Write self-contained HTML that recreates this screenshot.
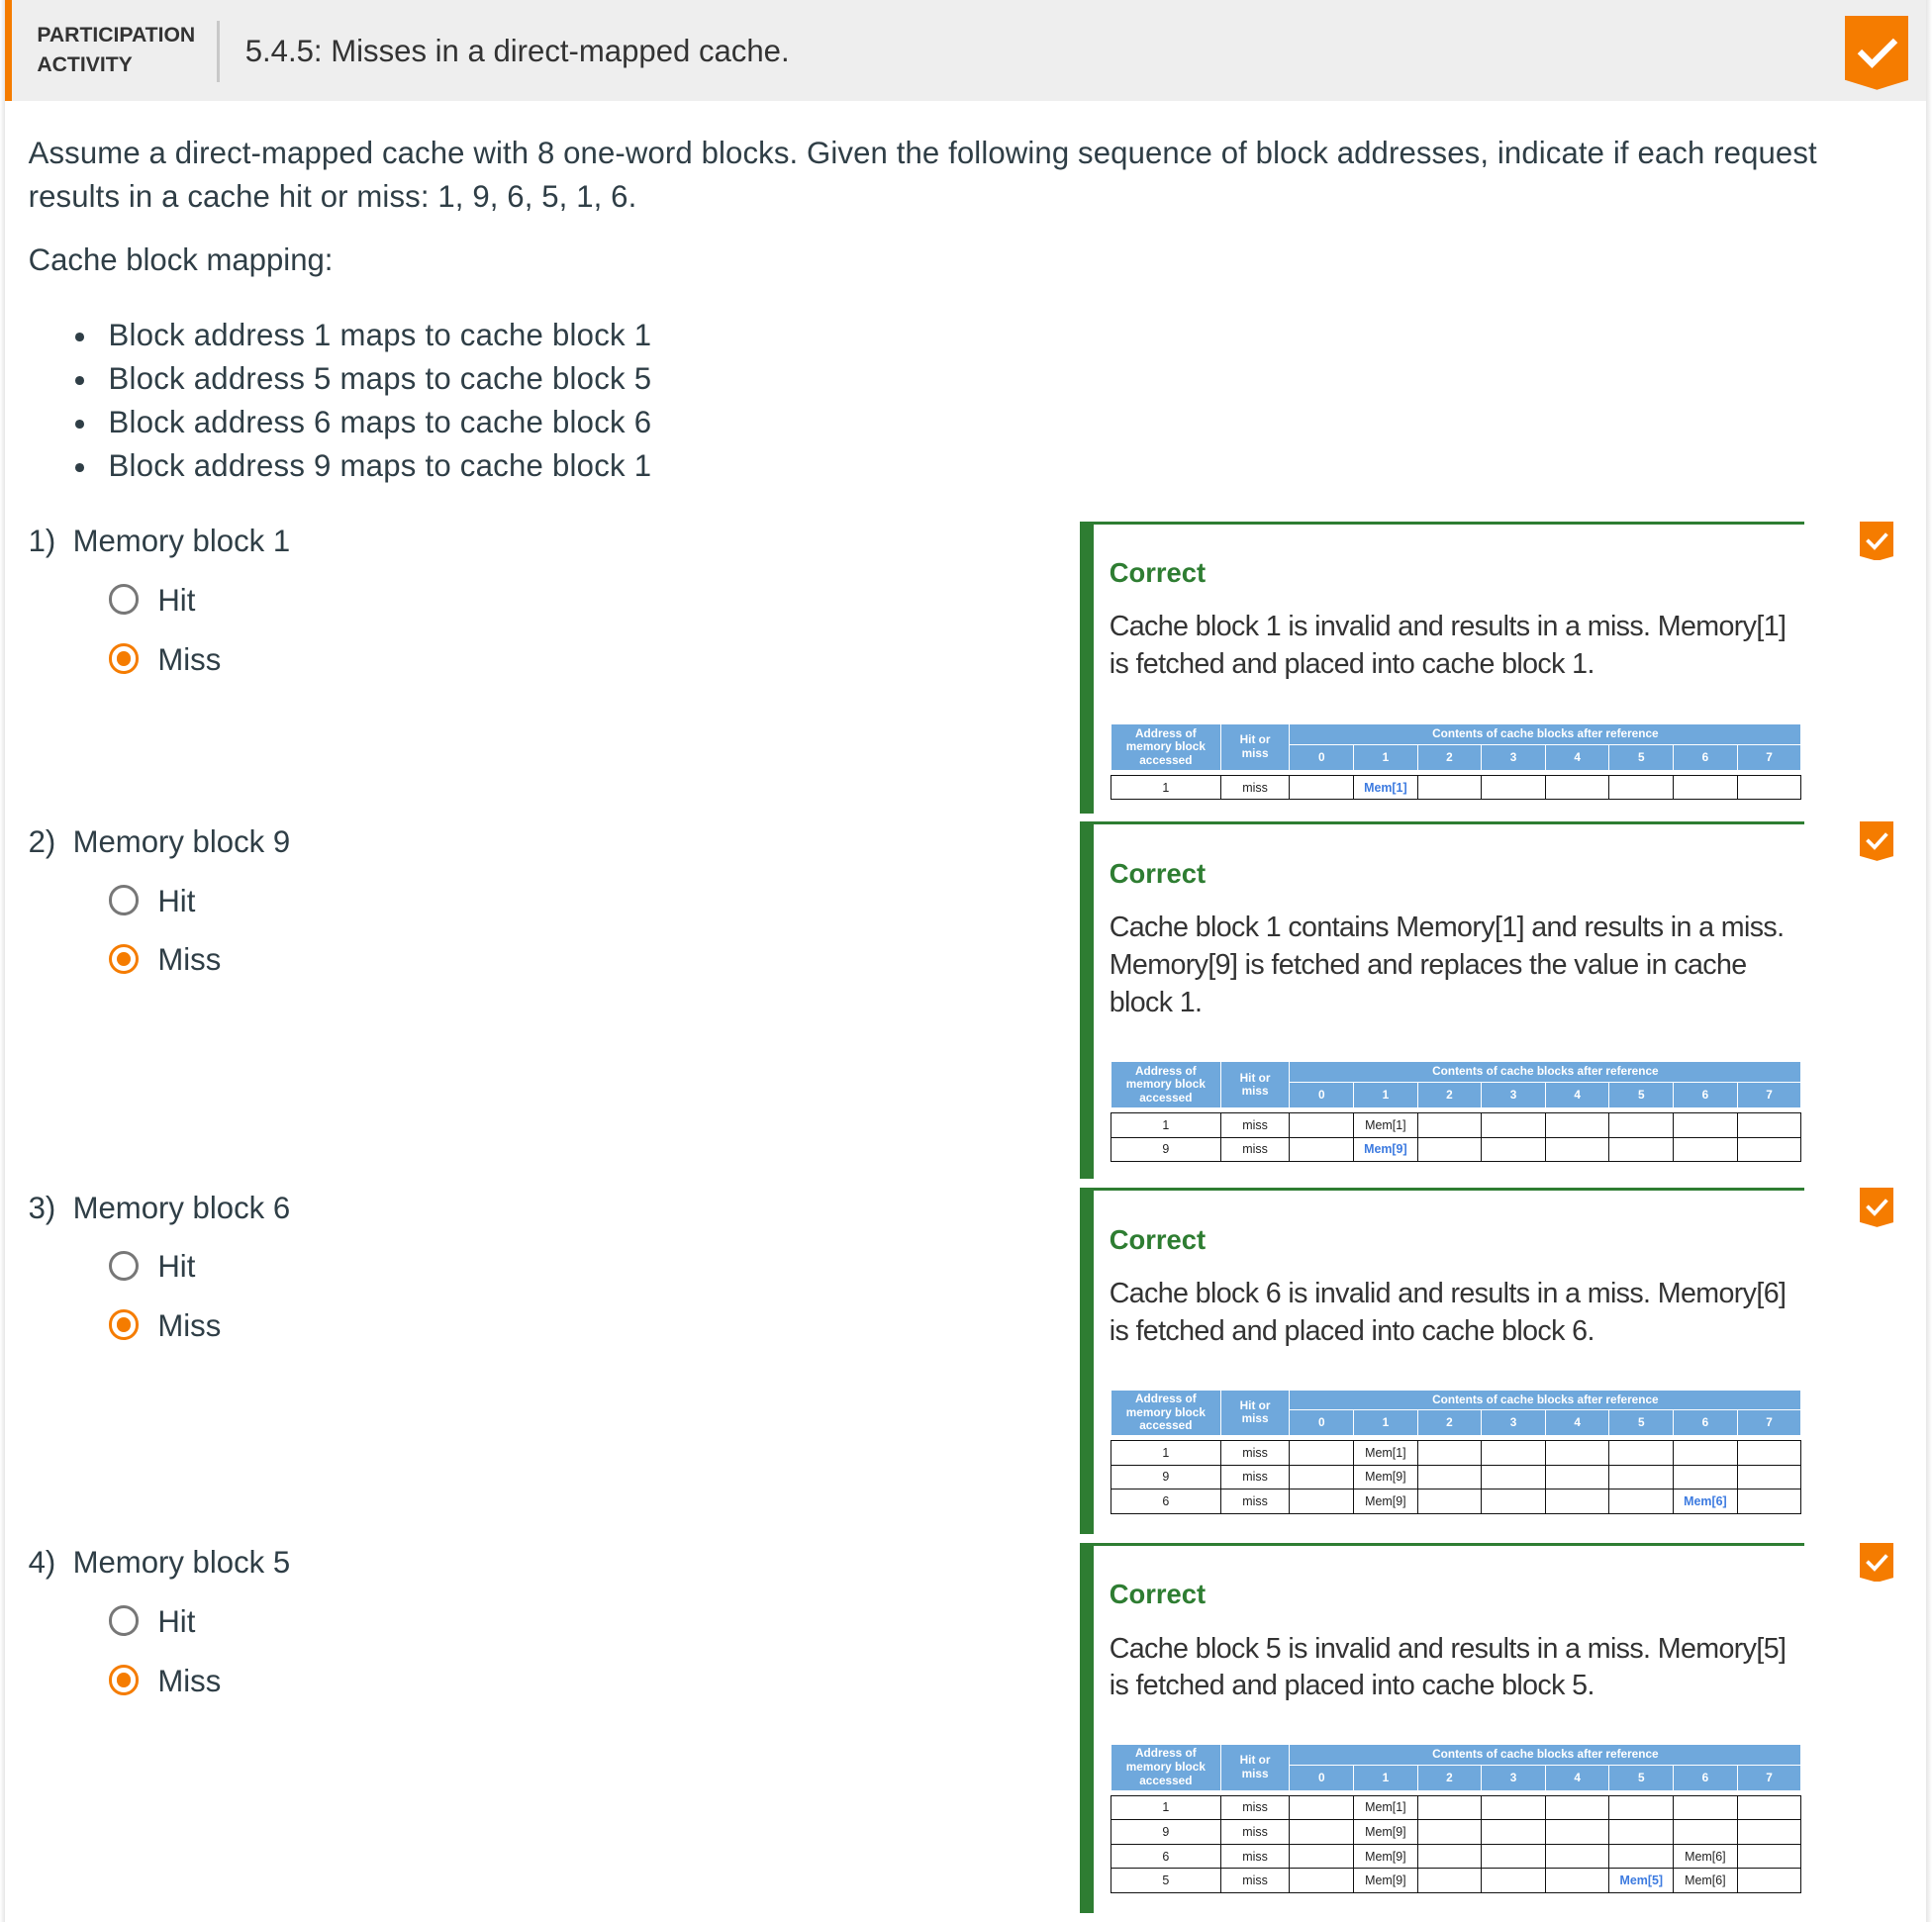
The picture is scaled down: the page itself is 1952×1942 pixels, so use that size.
<!DOCTYPE html>
<html><head><meta charset="utf-8"><style>
html{zoom:1.2449}
body{margin:0;width:1568px;height:1560px;position:relative;overflow:hidden;background:#fff;font-family:"Liberation Sans",sans-serif;color:#2f3e46}
.a{position:absolute;white-space:nowrap}
.lshadow{position:absolute;left:0;top:0;width:4px;height:1560px;background:linear-gradient(to right,#fff,#e6e6e6)}
.rshadow{position:absolute;left:1563px;top:0;width:5px;height:1560px;background:linear-gradient(to right,#e6e6e6,#fff)}
.hdr{position:absolute;left:4px;top:0;width:1559px;height:82px;background:#eeeeee}
.obar{position:absolute;left:4px;top:0;width:6px;height:82px;background:#f57c00}
.t25{font-size:25px}
.radio{position:absolute;width:20px;height:20px;border-radius:50%;border:2.5px solid #777;box-sizing:content-box}
.radio.on{border-color:#f57c00}
.radio.on::after{content:"";position:absolute;left:4px;top:4px;width:12px;height:12px;border-radius:50%;background:#f57c00}
.fb{position:absolute;left:876px;width:588px;border-top:3px solid #2e7d32;border-left:12px solid #2e7d32;box-sizing:border-box}
.fb .c{position:absolute;left:13px;top:27px;font-size:22px;font-weight:bold;color:#2e7d32}
.fb .p{position:absolute;left:13px;top:69px;font-size:23px;line-height:30.5px;width:570px;color:#333;letter-spacing:-0.5px}
.tb{position:absolute;left:14px;width:561px}
table{border-collapse:collapse;table-layout:fixed;width:561px}
.h td{background:#6fa8dc;color:#fff;font-weight:bold;font-size:9.5px;text-align:center;border:1px solid #fff;padding:0;line-height:11px}
.h tr.r1 td{height:16px}
.h tr.r2 td{height:20px}
.d{margin-top:3px}
.d td{border:1.3px solid #111;height:19px;font-size:10px;text-align:center;padding:0;color:#222}
.d td.b{color:#3d7be0;font-weight:bold}
.bl{position:absolute;left:59px;font-size:25px}
.bl div{position:relative;padding-left:29px;height:35.3px;line-height:35.3px;white-space:nowrap;letter-spacing:0.2px}
.bl div::before{content:"";position:absolute;left:2px;top:15px;width:7px;height:7px;border-radius:50%;background:#2f3e46}
</style></head><body>
<div class="lshadow"></div><div class="rshadow"></div>
<div class="hdr"></div><div class="obar"></div>
<div class="a" style="left:30px;top:17px;font-size:17px;font-weight:bold;line-height:24px;color:#333">PARTICIPATION<br>ACTIVITY</div>
<div class="a" style="left:176px;top:17px;width:2px;height:50px;background:#c8c8c8"></div>
<div class="a" style="left:199px;top:27px;font-size:25px;color:#333">5.4.5: Misses in a direct-mapped cache.</div>
<svg class="a" style="left:1497px;top:13px" width="52" height="60" viewBox="0 0 52 60"><path d="M0 0H52V52L26 60L0 52Z" fill="#f57c00"/><path d="M12 29L22 39L41 20" stroke="#fff" stroke-width="5" fill="none"/></svg>

<div class="a t25" style="left:23px;top:107px;line-height:35px;letter-spacing:0.1px">Assume a direct-mapped cache with 8 one-word blocks. Given the following sequence of block addresses, indicate if each request<br>results in a cache hit or miss: 1, 9, 6, 5, 1, 6.</div>
<div class="a t25" style="left:23px;top:197px">Cache block mapping:</div>
<div class="bl" style="top:255px"><div>Block address 1 maps to cache block 1</div><div>Block address 5 maps to cache block 5</div><div>Block address 6 maps to cache block 6</div><div>Block address 9 maps to cache block 1</div></div>

<div class="a t25" style="left:23px;top:425px">1)&nbsp;&nbsp;Memory block 1</div>
<div class="radio" style="left:88px;top:474px"></div><div class="a t25" style="left:128px;top:473px">Hit</div>
<div class="radio on" style="left:88px;top:522px"></div><div class="a t25" style="left:128px;top:521px">Miss</div>

<div class="a t25" style="left:23px;top:669px">2)&nbsp;&nbsp;Memory block 9</div>
<div class="radio" style="left:88px;top:718px"></div><div class="a t25" style="left:128px;top:717px">Hit</div>
<div class="radio on" style="left:88px;top:766px"></div><div class="a t25" style="left:128px;top:765px">Miss</div>

<div class="a t25" style="left:23px;top:966px">3)&nbsp;&nbsp;Memory block 6</div>
<div class="radio" style="left:88px;top:1015px"></div><div class="a t25" style="left:128px;top:1014px">Hit</div>
<div class="radio on" style="left:88px;top:1063px"></div><div class="a t25" style="left:128px;top:1062px">Miss</div>

<div class="a t25" style="left:23px;top:1254px">4)&nbsp;&nbsp;Memory block 5</div>
<div class="radio" style="left:88px;top:1303px"></div><div class="a t25" style="left:128px;top:1302px">Hit</div>
<div class="radio on" style="left:88px;top:1351px"></div><div class="a t25" style="left:128px;top:1350px">Miss</div>

<svg class="a" style="left:1509px;top:423px" width="28" height="32" viewBox="0 0 28 32"><path d="M0 0H28V28L14 32L0 28Z" fill="#f57c00"/><path d="M6 15L12 21L22 10" stroke="#fff" stroke-width="3" fill="none"/></svg>
<svg class="a" style="left:1509px;top:667px" width="28" height="32" viewBox="0 0 28 32"><path d="M0 0H28V28L14 32L0 28Z" fill="#f57c00"/><path d="M6 15L12 21L22 10" stroke="#fff" stroke-width="3" fill="none"/></svg>
<svg class="a" style="left:1509px;top:964px" width="28" height="32" viewBox="0 0 28 32"><path d="M0 0H28V28L14 32L0 28Z" fill="#f57c00"/><path d="M6 15L12 21L22 10" stroke="#fff" stroke-width="3" fill="none"/></svg>
<svg class="a" style="left:1509px;top:1252px" width="28" height="32" viewBox="0 0 28 32"><path d="M0 0H28V28L14 32L0 28Z" fill="#f57c00"/><path d="M6 15L12 21L22 10" stroke="#fff" stroke-width="3" fill="none"/></svg>

<div class="fb" style="top:423px;height:237px">
<div class="c">Correct</div>
<div class="p">Cache block 1 is invalid and results in a miss. Memory[1] is fetched and placed into cache block 1.</div>
<div class="tb" style="top:162px">
<table class="h"><colgroup><col style="width:89px"><col style="width:56px"><col span="8"></colgroup>
<tr class="r1"><td rowspan="2">Address of<br>memory block<br>accessed</td><td rowspan="2">Hit or<br>miss</td><td colspan="8">Contents of cache blocks after reference</td></tr>
<tr class="r2"><td>0</td><td>1</td><td>2</td><td>3</td><td>4</td><td>5</td><td>6</td><td>7</td></tr></table>
<table class="d"><colgroup><col style="width:89px"><col style="width:56px"><col span="8"></colgroup>
<tr><td>1</td><td>miss</td><td></td><td class="b">Mem[1]</td><td></td><td></td><td></td><td></td><td></td><td></td></tr></table>
</div></div>

<div class="fb" style="top:667px;height:290px">
<div class="c">Correct</div>
<div class="p">Cache block 1 contains Memory[1] and results in a miss. Memory[9] is fetched and replaces the value in cache block 1.</div>
<div class="tb" style="top:192px">
<table class="h"><colgroup><col style="width:89px"><col style="width:56px"><col span="8"></colgroup>
<tr class="r1"><td rowspan="2">Address of<br>memory block<br>accessed</td><td rowspan="2">Hit or<br>miss</td><td colspan="8">Contents of cache blocks after reference</td></tr>
<tr class="r2"><td>0</td><td>1</td><td>2</td><td>3</td><td>4</td><td>5</td><td>6</td><td>7</td></tr></table>
<table class="d"><colgroup><col style="width:89px"><col style="width:56px"><col span="8"></colgroup>
<tr><td>1</td><td>miss</td><td></td><td>Mem[1]</td><td></td><td></td><td></td><td></td><td></td><td></td></tr>
<tr><td>9</td><td>miss</td><td></td><td class="b">Mem[9]</td><td></td><td></td><td></td><td></td><td></td><td></td></tr></table>
</div></div>

<div class="fb" style="top:964px;height:281px">
<div class="c">Correct</div>
<div class="p">Cache block 6 is invalid and results in a miss. Memory[6] is fetched and placed into cache block 6.</div>
<div class="tb" style="top:161px">
<table class="h"><colgroup><col style="width:89px"><col style="width:56px"><col span="8"></colgroup>
<tr class="r1"><td rowspan="2">Address of<br>memory block<br>accessed</td><td rowspan="2">Hit or<br>miss</td><td colspan="8">Contents of cache blocks after reference</td></tr>
<tr class="r2"><td>0</td><td>1</td><td>2</td><td>3</td><td>4</td><td>5</td><td>6</td><td>7</td></tr></table>
<table class="d"><colgroup><col style="width:89px"><col style="width:56px"><col span="8"></colgroup>
<tr><td>1</td><td>miss</td><td></td><td>Mem[1]</td><td></td><td></td><td></td><td></td><td></td><td></td></tr>
<tr><td>9</td><td>miss</td><td></td><td>Mem[9]</td><td></td><td></td><td></td><td></td><td></td><td></td></tr>
<tr><td>6</td><td>miss</td><td></td><td>Mem[9]</td><td></td><td></td><td></td><td></td><td class="b">Mem[6]</td><td></td></tr></table>
</div></div>

<div class="fb" style="top:1252px;height:301px">
<div class="c">Correct</div>
<div class="p">Cache block 5 is invalid and results in a miss. Memory[5] is fetched and placed into cache block 5.</div>
<div class="tb" style="top:161px">
<table class="h"><colgroup><col style="width:89px"><col style="width:56px"><col span="8"></colgroup>
<tr class="r1"><td rowspan="2">Address of<br>memory block<br>accessed</td><td rowspan="2">Hit or<br>miss</td><td colspan="8">Contents of cache blocks after reference</td></tr>
<tr class="r2"><td>0</td><td>1</td><td>2</td><td>3</td><td>4</td><td>5</td><td>6</td><td>7</td></tr></table>
<table class="d"><colgroup><col style="width:89px"><col style="width:56px"><col span="8"></colgroup>
<tr><td>1</td><td>miss</td><td></td><td>Mem[1]</td><td></td><td></td><td></td><td></td><td></td><td></td></tr>
<tr><td>9</td><td>miss</td><td></td><td>Mem[9]</td><td></td><td></td><td></td><td></td><td></td><td></td></tr>
<tr><td>6</td><td>miss</td><td></td><td>Mem[9]</td><td></td><td></td><td></td><td></td><td>Mem[6]</td><td></td></tr>
<tr><td>5</td><td>miss</td><td></td><td>Mem[9]</td><td></td><td></td><td></td><td class="b">Mem[5]</td><td>Mem[6]</td><td></td></tr></table>
</div></div>
</body></html>
